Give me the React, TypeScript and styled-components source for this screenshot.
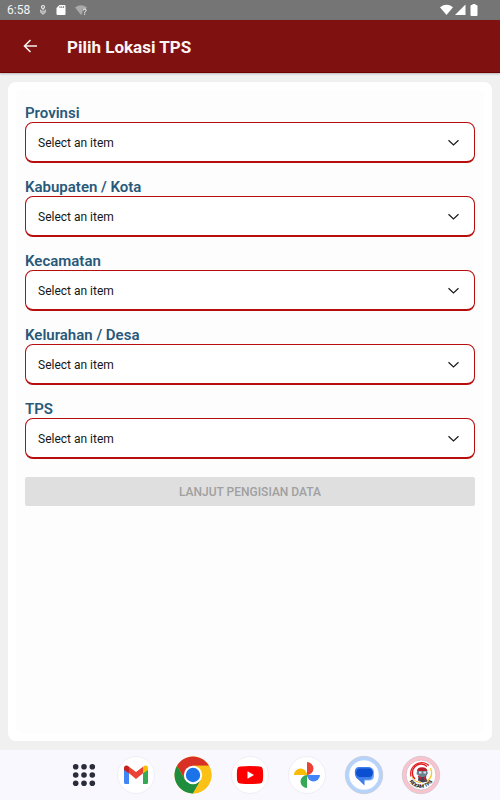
import React from 'react';
import styled, { createGlobalStyle } from 'styled-components';

const GlobalStyle = createGlobalStyle`
  * { box-sizing: border-box; }
  body {
    margin: 0;
    background: #f0f0f0;
    font-family: Roboto, "Liberation Sans", sans-serif;
  }
  button, select { font-family: inherit; }
`;

const Screen = styled.div`
  min-height: 100vh;
  display: flex;
  flex-direction: column;
`;

const StatusBar = styled.div`
  height: 20px;
  padding: 0 22px 0 7px;
  display: flex;
  align-items: center;
  justify-content: space-between;
  background: #757575;
  color: #f4f4f4;
`;

const StatusGroup = styled.div<{ $gap: number }>`
  display: flex;
  align-items: center;
  gap: ${(p) => p.$gap}px;
`;

const Clock = styled.span`
  font-size: 12px;
  line-height: 20px;
`;

const AppBar = styled.header`
  height: 53px;
  padding: 0 20px;
  display: flex;
  align-items: center;
  gap: 27px;
  background: #7f1210;
  border-bottom: 1px solid #700000;
  box-shadow: 0 1px 2px rgba(0, 0, 0, 0.25);
`;

const BackButton = styled.button`
  width: 20px;
  height: 20px;
  padding: 0;
  border: 0;
  background: none;
  color: #f6eeee;
  display: grid;
  place-items: center;
`;

const Title = styled.h1`
  margin: 0;
  padding-top: 2px;
  font-size: 17px;
  line-height: 20px;
  font-weight: 700;
  color: #fbf4f4;
`;

const Main = styled.main`
  flex: 1;
  display: flex;
  padding: 9px 8px;
`;

const Card = styled.div`
  flex: 1;
  display: flex;
  padding: 8px;
  border-radius: 8px;
  background: #ffffff;
`;

const Form = styled.form`
  flex: 1;
  padding: 14px 9px;
  border-radius: 6px;
  background: #fdfdfd;
`;

const Field = styled.div`
  margin-bottom: 15px;
`;

const Label = styled.label`
  display: block;
  font-size: 15px;
  line-height: 18px;
  font-weight: 600;
  color: #28597a;
`;

const SelectBox = styled.div`
  display: grid;
  align-items: center;

  > * { grid-area: 1 / 1; }

  > svg {
    justify-self: end;
    margin-right: 15px;
    pointer-events: none;
  }
`;

const Select = styled.select`
  appearance: none;
  width: 100%;
  height: 41px;
  padding: 2px 40px 0 12px;
  border: 1px solid #b80d0d;
  border-bottom-width: 2px;
  border-radius: 8px;
  background: #ffffff;
  color: #161616;
  font-size: 12px;
`;

const SubmitButton = styled.button`
  display: block;
  width: 100%;
  height: 29px;
  margin-top: 18px;
  padding: 0;
  border: 0;
  border-radius: 2px;
  background: #dfdfdf;
  color: #a0a0a0;
  font-size: 12px;
  font-weight: 500;
  text-transform: uppercase;
`;

const Dock = styled.nav`
  height: 50px;
  padding-left: 10px;
  display: flex;
  align-items: center;
  justify-content: center;
  background: #faf8ff;
`;

const DockButton = styled.button<{ $width: number }>`
  width: ${(p) => p.$width}px;
  height: 50px;
  padding: 0;
  border: 0;
  background: none;
  display: grid;
  place-items: center;
`;

const fields = [
  { id: 'provinsi', label: 'Provinsi' },
  { id: 'kabupaten', label: 'Kabupaten / Kota' },
  { id: 'kecamatan', label: 'Kecamatan' },
  { id: 'kelurahan', label: 'Kelurahan / Desa' },
  { id: 'tps', label: 'TPS' },
];

const MicIcon = () => (
  <svg width="8" height="12" viewBox="0 0 8 12" fill="none" stroke="#efefef">
    <circle cx="4" cy="3" r="1.5" strokeWidth="1.2" />
    <path d="M1 5.800 4 8.400l3-2.600M4 4.500v2" strokeWidth="1" />
    <path d="M1 7.500L4 10.300l3-2.800" strokeWidth="1" />
  </svg>
);

const SdIcon = () => (
  <svg width="10" height="12" viewBox="0 0 10 12">
    <path fill="#fff" fillRule="evenodd" d="M3.4 1H8.500q1 0 1 1v8q0 1-1 1h-7q-1 0-1-1V4zM3.500 2.200v1.800h1V2.200zm1.800 0v1.800h1V2.200zm1.800 0v1.800h1V2.200z" />
  </svg>
);

const WeakWifiIcon = () => (
  <svg width="13" height="12" viewBox="0 0 13 12" fill="none">
    <path fill="#a9a9a9" d="M0 3.400Q6 -1 12 3.400L10.800 5H7.500v4L6 11z" />
    <path stroke="#fff" d="M8.200 6.600q.1-1.500 1.500-1.500t1.400 1.300c0 1-1.400 1.100-1.400 2.400M9.700 9.600v1.200" />
  </svg>
);

const WifiIcon = () => (
  <svg width="13" height="12" viewBox="0 0 13 12">
    <path fill="#fff" d="M0 3.200Q6.500 -1.500 13 3.200L6.500 11z" />
  </svg>
);

const SignalIcon = () => (
  <svg width="11" height="12" viewBox="0 0 11 12">
    <path fill="#fff" d="M10.500.5V11H0z" />
  </svg>
);

const BatteryIcon = () => (
  <svg width="8" height="12" viewBox="0 0 8 12">
    <path fill="#fff" d="M2.500 0h3v1H6.500q1 0 1 1v9q0 1-1 1h-5q-1 0-1-1V2q0-1 1-1h1z" />
  </svg>
);

const BackIcon = () => (
  <svg width="14" height="14" viewBox="0 0 14 14" fill="none" stroke="currentColor" strokeWidth="1.6">
    <path d="M14 7H1.500M7.500 1 1.500 7l6 6" />
  </svg>
);

const ChevronIcon = () => (
  <svg width="13" height="8" viewBox="0 0 13 8" fill="none" stroke="#1b1b1b" strokeWidth="1.2">
    <path d="M1.500 1.200l5 4.800 5-4.800" />
  </svg>
);

const AppsIcon = () => (
  <svg width="24" height="24" viewBox="0 0 24 24" fill="#2b2c3b">
    {[3.7, 12, 20.3].map((y) => [3.7, 12, 20.3].map((x) => <circle key={`${x}-${y}`} cx={x} cy={y} r="2.800" />))}
  </svg>
);

const Disc = () => <circle cx="20" cy="20" r="18.500" fill="#fff" stroke="#f0eef4" />;

const GmailIcon = () => (
  <svg width="40" height="40" viewBox="0 0 40 40">
    <Disc />
    <path fill="#4285f4" d="M8 14l5 3.800V29H9.500Q8 29 8 27.500z" />
    <path fill="#34a853" d="M32 14l-5 3.800V29h3.500q1.500 0 1.500-1.500z" />
    <path fill="#ea4335" d="M13 11.800l7 5.300 7-5.300v6.500L20 24l-7-5.700z" />
    <path fill="#c5221f" d="M8 15v-2q0-2.500 2.500-2.500 1 0 2.500 1.300v6.500L8 15z" />
    <path fill="#fbbc04" d="M32 15v-2q0-2.500-2.500-2.500-1 0-2.500 1.300v6.500z" />
  </svg>
);

const ChromeIcon = () => (
  <svg width="40" height="40" viewBox="0 0 40 40">
    <circle cx="20" cy="20" r="18.500" fill="#fbc116" />
    <path fill="#d93025" d="M4 10.750A18.500 18.500 0 0 1 36 10.750H20L12 24.600z" />
    <path fill="#1e8e3e" d="M4 10.750A18.500 18.500 0 0 0 20 38.500L28 24.600 12 24.600z" />
    <path fill="#fbc116" d="M36 10.750A18.500 18.500 0 0 1 20 38.500L28 24.600 20 10.750z" />
    <circle cx="20" cy="20" r="9.200" fill="#fff" />
    <circle cx="20" cy="20" r="7.200" fill="#1a73e8" />
  </svg>
);

const YoutubeIcon = () => (
  <svg width="40" height="40" viewBox="0 0 40 40">
    <Disc />
    <path fill="#f00" d="M10 11.500q10-1 20 0 2.500.3 2.800 2.800.7 5.700 0 11.400-.3 2.500-2.800 2.800-10 1-20 0-2.500-.3-2.800-2.800-.7-5.700 0-11.400.3-2.500 2.800-2.800z" />
    <path fill="#fff" d="M17.500 16.300v7.400L24 20z" />
  </svg>
);

const PhotosIcon = () => (
  <svg width="40" height="40" viewBox="0 0 40 40">
    <Disc />
    <path fill="#ea4335" d="M20 7a6.500 6.500 0 0 1 0 13z" />
    <path fill="#4285f4" d="M33 20a6.500 6.500 0 0 1-13 0z" />
    <path fill="#34a853" d="M20 33a6.500 6.500 0 0 1 0-13z" />
    <path fill="#fbbc04" d="M7 20a6.500 6.500 0 0 1 13 0z" />
  </svg>
);

const MessagesIcon = () => (
  <svg width="40" height="40" viewBox="0 0 40 40">
    <circle cx="20" cy="20" r="18.700" fill="#b6d3fb" stroke="#cbd0da" />
    <circle cx="20" cy="20" r="14.800" fill="#fff" />
    <path fill="#7aacf9" d="M14.500 12.500h10.500q5 0 5 5v3q0 5-5 5h-5l-4-1q-5-1.500-5-7 0-3 3.500-5z" />
    <path fill="#3f7de8" d="M15 12h9q4.500 0 4.500 4.500v3.500q0 4.500-4.500 4.500h-3.500V30.500L14.500 24.800Q10.800 22.500 10.800 17 11 12 15 12z" />
    <rect x="12" y="13.500" width="17" height="8.500" rx="4.250" fill="#0b50d0" />
  </svg>
);

const RekamIcon = () => (
  <svg width="40" height="40" viewBox="0 0 40 40" fill="none">
    <circle cx="20" cy="20" r="18.700" fill="#fac3cd" stroke="#d8cbd2" />
    <circle cx="20" cy="20" r="15" fill="#fff" stroke="#d9c4c8" />
    <path d="M28 10.500A11 11 0 0 0 10 21.500" stroke="#e6282c" strokeWidth="1.300" />
    <path d="M26 11.500A8.200 8.200 0 1 0 14 24" stroke="#df1c20" strokeWidth="1.500" />
    <path d="M29.500 13q3.500 8.500-3.500 13" stroke="#f7c929" strokeWidth="1.300" />
    <path d="M11 22q3 5.500 9 5.500" stroke="#f5b52c" strokeWidth="1" />
    <path d="M16 16q0-3.800 5-3.800t5.500 3.800z" fill="#b51d29" />
    <path d="M16 16h10l1 2-2 3.500h-6L15.500 19z" fill="#6b8190" />
    <path d="M18 16.500h2.500v2H18zm4.500 0H25v2h-2.500z" fill="#d9e5eb" />
    <path d="M17.500 21.500h7l2 5-5 1-4.500-2z" fill="#3b4552" />
    <path d="M17 21l3 2-2 3m7-5-2 2 2 3.500" stroke="#cb2430" strokeWidth="1.200" />
    <path id="rekam-arc" d="M6.500 22A13.800 13.800 0 0 0 33.500 22" />
    <text fill="#111" fontSize="5" fontWeight="700" textAnchor="middle">
      <textPath href="#rekam-arc" startOffset="50%">REKAM TPS</textPath>
    </text>
  </svg>
);

const apps = [
  { name: 'All apps', Icon: AppsIcon, width: 47 },
  { name: 'Gmail', Icon: GmailIcon, width: 57 },
  { name: 'Chrome', Icon: ChromeIcon, width: 57 },
  { name: 'YouTube', Icon: YoutubeIcon, width: 57 },
  { name: 'Photos', Icon: PhotosIcon, width: 57 },
  { name: 'Messages', Icon: MessagesIcon, width: 57 },
  { name: 'Rekam TPS', Icon: RekamIcon, width: 57 },
];

export default function App() {
  return (
    <Screen>
      <GlobalStyle />
      <StatusBar>
        <StatusGroup $gap={9}>
          <Clock>6:58</Clock>
          <MicIcon />
          <SdIcon />
          <WeakWifiIcon />
        </StatusGroup>
        <StatusGroup $gap={2}>
          <WifiIcon />
          <SignalIcon />
          <span />
          <BatteryIcon />
        </StatusGroup>
      </StatusBar>
      <AppBar>
        <BackButton type="button" aria-label="Kembali">
          <BackIcon />
        </BackButton>
        <Title>Pilih Lokasi TPS</Title>
      </AppBar>
      <Main>
        <Card>
          <Form>
            {fields.map(({ id, label }) => (
              <Field key={id}>
                <Label htmlFor={id}>{label}</Label>
                <SelectBox>
                  <Select id={id} defaultValue="">
                    <option value="">Select an item</option>
                  </Select>
                  <ChevronIcon />
                </SelectBox>
              </Field>
            ))}
            <SubmitButton type="submit" disabled>
              Lanjut Pengisian Data
            </SubmitButton>
          </Form>
        </Card>
      </Main>
      <Dock>
        {apps.map(({ name, Icon, width }) => (
          <DockButton key={name} type="button" aria-label={name} $width={width}>
            <Icon />
          </DockButton>
        ))}
      </Dock>
    </Screen>
  );
}
